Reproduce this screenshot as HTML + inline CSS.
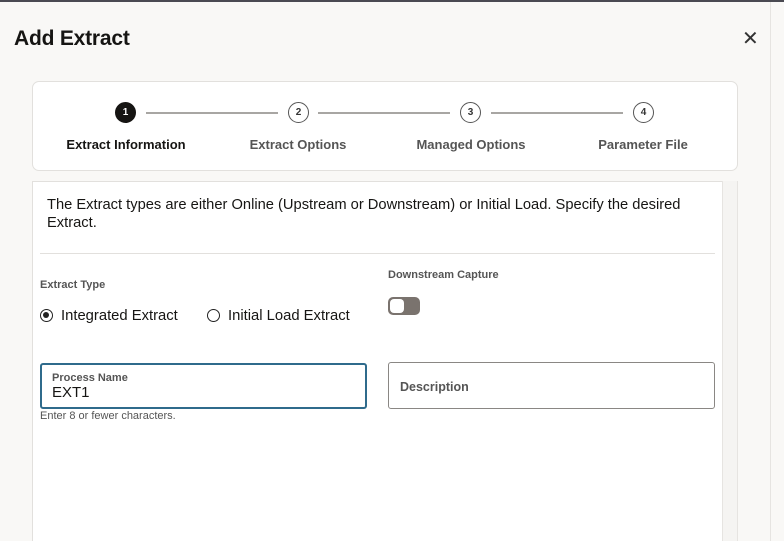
<!DOCTYPE html>
<html><head><style>
*{box-sizing:border-box;margin:0;padding:0}
body{width:784px;height:541px;overflow:hidden;background:#f9f8f6;font-family:"Liberation Sans",sans-serif;color:#161513;position:relative}
.abs{position:absolute}
.topline{left:0;top:0;width:784px;height:2px;background:#4a4a52}
.vr{left:770px;top:2px;width:1px;height:539px;background:#e6e4e1}
h1{position:absolute;left:14px;top:27px;font-size:21px;font-weight:bold;letter-spacing:-0.2px}
.x{left:742px;top:26px;font-size:20px;color:#333;font-weight:normal}
.card{left:32px;top:81px;width:706px;height:90px;background:#fff;border:1px solid #e2e0dd;border-radius:7px}
.c{position:absolute;width:21px;height:21px;border-radius:50%;border:1px solid #555;background:#fff;font-size:10px;font-weight:bold;text-align:center;line-height:19px;color:#333;top:102px}
.c.a{background:#161513;color:#fff;border-color:#161513}
.ln{position:absolute;top:112px;height:2px;background:#a8a6a3}
.lbl{position:absolute;top:137px;font-size:13px;font-weight:bold;color:#555;transform:translateX(-50%);white-space:nowrap}
.panel{left:32px;top:181px;width:691px;height:360px;background:#fff;border:1px solid #e2e0dd;border-bottom:none}
.sb{left:722px;top:181px;width:16px;height:360px;background:#f5f4f2;border-left:1px solid #e6e4e1;border-right:1px solid #e6e4e1}
.intro{left:47px;top:196px;width:660px;font-size:14.7px;line-height:18px;color:#161513}
.hr{left:40px;top:253px;width:675px;height:1px;background:#e2e0dd}
.sm{font-size:11px;font-weight:bold;color:#555}
.radio{font-size:14.8px;color:#161513}
.rc{display:inline-block;width:13px;height:13px;border:1.5px solid #222;border-radius:50%;vertical-align:-2px;margin-right:8px;position:relative}
.rc.on::after{content:"";position:absolute;left:2px;top:2px;width:6px;height:6px;border-radius:50%;background:#222}
.tog{left:388px;top:297px;width:32px;height:18px;border-radius:5px;background:#7a736e}
.tog::after{content:"";position:absolute;left:2px;top:2px;width:14px;height:14px;border-radius:4px;background:#fff}
.inp{border:1px solid #8a8784;border-radius:3px;background:#fff}
</style></head><body>
<div class="abs topline"></div>
<div class="abs vr"></div>
<h1>Add Extract</h1>
<div class="abs x">✕</div>
<div class="abs card"></div>
<div class="c a" style="left:115px">1</div>
<div class="ln" style="left:146px;width:132px"></div>
<div class="c" style="left:288px">2</div>
<div class="ln" style="left:318px;width:132px"></div>
<div class="c" style="left:460px">3</div>
<div class="ln" style="left:491px;width:132px"></div>
<div class="c" style="left:633px">4</div>
<div class="lbl" style="left:126px;color:#161513">Extract Information</div>
<div class="lbl" style="left:298px">Extract Options</div>
<div class="lbl" style="left:471px">Managed Options</div>
<div class="lbl" style="left:643px">Parameter File</div>
<div class="abs panel"></div>
<div class="abs sb"></div>
<div class="abs intro">The Extract types are either Online (Upstream or Downstream) or Initial Load. Specify the desired<br>Extract.</div>
<div class="abs hr"></div>
<div class="abs sm" style="left:40px;top:279px">Extract Type</div>
<div class="abs radio" style="left:40px;top:308px"><span class="rc on"></span>Integrated Extract</div>
<div class="abs radio" style="left:207px;top:308px"><span class="rc"></span>Initial Load Extract</div>
<div class="abs sm" style="left:388px;top:269px">Downstream Capture</div>
<div class="abs tog"></div>
<div class="abs inp" style="left:40px;top:363px;width:327px;height:46px;border:2px solid #2f6b8c"></div>
<div class="abs sm" style="left:52px;top:372px">Process Name</div>
<div class="abs" style="left:52px;top:384px;font-size:15px">EXT1</div>
<div class="abs" style="left:40px;top:410px;font-size:11px;color:#555">Enter 8 or fewer characters.</div>
<div class="abs inp" style="left:388px;top:362px;width:327px;height:47px"></div>
<div class="abs" style="left:400px;top:380px;font-size:12.5px;font-weight:bold;color:#555">Description</div>
</body></html>
